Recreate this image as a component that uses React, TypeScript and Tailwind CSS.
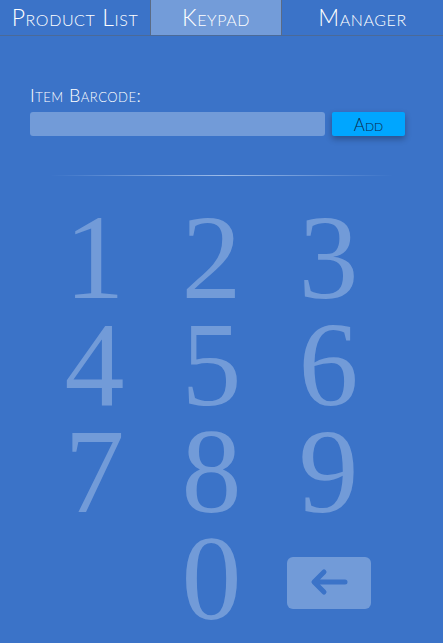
import React, { useState } from 'react';

const tabs = ['Product List', 'Keypad', 'Manager'];
const digits = ['1', '2', '3', '4', '5', '6', '7', '8', '9'];

const App: React.FC = () => {
  const [active, setActive] = useState('Keypad');
  const [code, setCode] = useState('');

  return (
    <div className="w-[443px] h-[643px] overflow-hidden bg-[#3b73c8] font-['Lato',sans-serif] text-white">
      {/* Tabs */}
      <div className="flex h-[36px] border-b border-[#4b6a98]">
        {tabs.map((t) => (
          <button
            key={t}
            onClick={() => setActive(t)}
            className={`h-[35px] text-[23px] font-light leading-none [font-variant:small-caps] tracking-[0.6px] ${
              t === 'Product List' ? 'w-[150px]' : t === 'Keypad' ? 'w-[132px]' : 'flex-1'
            } ${active === t ? 'bg-[#739cd9] border-x border-[#5a6b86]' : ''}`}
          >
            {t}
          </button>
        ))}
      </div>

      {/* Barcode entry */}
      <div className="px-[30px] pt-[50px]">
        <div className="text-[18px] font-light leading-none [font-variant:small-caps] tracking-[0.5px]">Item Barcode:</div>
        <div className="flex gap-[7px] mt-[8px]">
          <input
            value={code}
            onChange={(e) => setCode(e.target.value)}
            className="w-[295px] h-[24px] rounded-[3px] bg-[#729bd8] outline-none px-2 text-white"
          />
          <button className="w-[73px] h-[24px] rounded-[2px] bg-[#00a6ff] text-[#0d2747] text-[17px] leading-none font-light [font-variant:small-caps] shadow-[0_3px_6px_rgba(0,0,0,0.3)]">
            Add
          </button>
        </div>
        <div className="mt-[39px] mx-[20px] h-px bg-gradient-to-r from-transparent via-[#9cbbe9] to-transparent" />
      </div>

      {/* Keypad */}
      <div className="grid grid-cols-3 w-[351px] ml-[36px] mt-[28px] font-['Liberation_Serif',serif] text-[120px] leading-[107px] text-[#729bd8]">
        {digits.map((d) => (
          <button key={d} onClick={() => setCode(code + d)} className="text-center">
            {d}
          </button>
        ))}
        <div />
        <button onClick={() => setCode(code + '0')} className="text-center">0</button>
        <div className="flex justify-center items-start pt-[32px]">
          <button
            onClick={() => setCode(code.slice(0, -1))}
            className="w-[84px] h-[52px] rounded-[6px] bg-[#729bd8] flex items-center justify-center"
          >
            <svg width="40" height="30" viewBox="0 0 40 30" fill="none" stroke="#3b73c8" strokeWidth="5" strokeLinecap="round" strokeLinejoin="round">
              <path d="M36 14H6M15 4L5 14l10 10" />
            </svg>
          </button>
        </div>
      </div>
    </div>
  );
};

export default App;
